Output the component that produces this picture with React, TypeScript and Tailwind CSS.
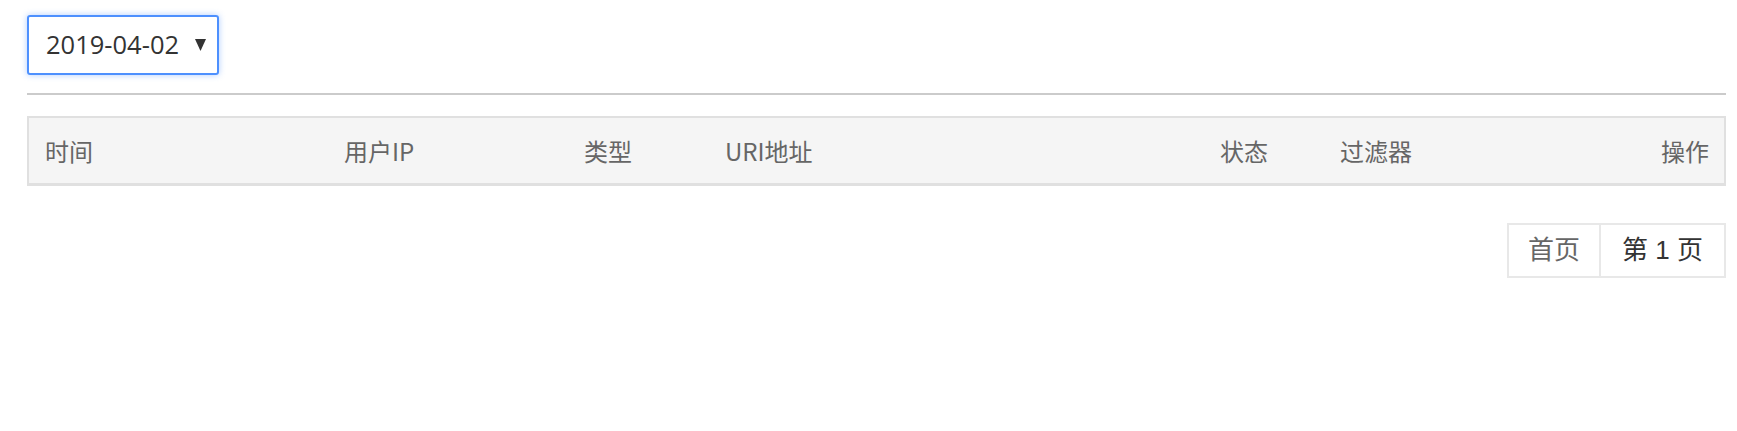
import React from "react";

export default function App() {
  const cols = [
    { label: "时间", w: "w-[299px]" },
    { label: "用户IP", w: "w-[240px]" },
    { label: "类型", w: "w-[141px]" },
    { label: "URI地址", w: "w-[495px]" },
    { label: "状态", w: "w-[120px]" },
    { label: "过滤器", w: "flex-1" },
  ];
  return (
    <div
      className="w-[1737px] h-[431px] bg-white pl-[27px] pr-[11px] pt-[15px]"
      style={{ fontFamily: '"Open Sans", "Noto Sans CJK SC", sans-serif' }}
    >
      <div className="w-[192px] h-[60px] border-2 border-[#4d90fe] rounded-[3px] shadow-[0_0_6px_rgba(77,144,254,0.45)] flex items-center pl-[17px] pr-[11px] justify-between">
        <span className="text-[25.5px] text-[#333] leading-none">2019-04-02</span>
        <svg width="11" height="12" viewBox="0 0 11 12">
          <polygon points="0,0 11,0 5.5,12" fill="#333" />
        </svg>
      </div>
      <div className="mt-[18px] h-[2px] bg-[#cbcbcb]" />
      <div className="mt-[21px] h-[70px] border-2 border-b-[3px] border-[#e0e0e0] bg-[#f5f5f5] flex items-center pl-[16px] pr-[15px]">
        {cols.map((c) => (
          <div
            key={c.label}
            className={`${c.w} text-[24px] text-[#666] leading-none`}
            style={{ fontFamily: '"Noto Sans CJK SC", sans-serif' }}
          >
            {c.label}
          </div>
        ))}
        <div
          className="text-[24px] text-[#666] leading-none"
          style={{ fontFamily: '"Noto Sans CJK SC", sans-serif' }}
        >
          操作
        </div>
      </div>
      <div className="flex justify-end mt-[37px]">
        <div
          className="flex h-[55px] border-2 border-[#e8e8e8] text-[26px]"
          style={{ fontFamily: '"Liberation Sans", "Noto Sans CJK SC", sans-serif' }}
        >
          <div className="w-[92px] flex items-center justify-center text-[#666] border-r-2 border-[#e8e8e8]">首页</div>
          <div className="w-[123px] flex items-center justify-center text-[#333]">第 1 页</div>
        </div>
      </div>
    </div>
  );
}
